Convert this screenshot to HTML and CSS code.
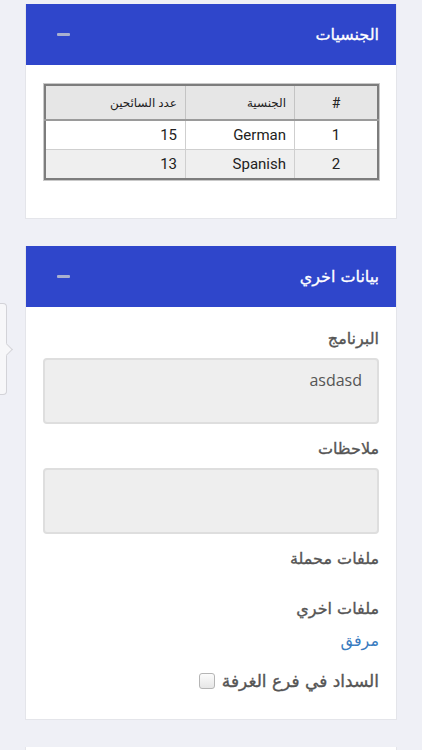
FILE: index.html
```html
<!DOCTYPE html>
<html lang="ar" dir="rtl">
<head>
<meta charset="utf-8">
<title>بيانات</title>
<link rel="stylesheet" href="styles.css">
</head>
<body>
<div class="page">
  <section class="card">
    <header class="card-head">
      <h2 class="card-title">الجنسيات</h2>
      <span class="collapse"></span>
    </header>
    <div class="card-body table-body">
      <table class="grid">
        <thead>
          <tr><th class="c1">#</th><th class="c2">الجنسية</th><th class="c3">عدد السائحين</th></tr>
        </thead>
        <tbody>
          <tr><td class="c1">1</td><td class="c2">German</td><td class="c3">15</td></tr>
          <tr class="alt"><td class="c1">2</td><td class="c2">Spanish</td><td class="c3">13</td></tr>
        </tbody>
      </table>
    </div>
  </section>

  <section class="card">
    <header class="card-head">
      <h2 class="card-title">بيانات اخري</h2>
      <span class="collapse"></span>
    </header>
    <div class="card-body form-body">
      <label class="lbl">البرنامج</label>
      <div class="field">asdasd</div>
      <label class="lbl gap-s">ملاحظات</label>
      <div class="field"></div>
      <label class="lbl gap-s">ملفات محملة</label>
      <label class="lbl gap-l">ملفات اخري</label>
      <a class="link" href="#">مرفق</a>
      <div class="check-row">
        <span class="lbl check-lbl">السداد في فرع الغرفة</span>
        <span class="box"></span>
      </div>
    </div>
  </section>

  <section class="card stub"></section>
</div>
<div class="popover"></div>
</body>
</html>
```
FILE: styles.css
```css
html, body {
  margin: 0;
  padding: 0;
  background: #eff0f6;
  height: 750px;
  overflow: hidden;
}
body {
  font-family: "DejaVu Sans", "Noto Sans", sans-serif;
  position: relative;
}
.page {
  padding: 4px 25px 0 25px;
  display: flex;
  flex-direction: column;
  gap: 27px;
}
.card {
  background: #fff;
  border: 1px solid #e4e5ea;
  border-top: none;
  box-sizing: border-box;
  width: 372px;
}
.card-head {
  background: #2f46cb;
  height: 61px;
  display: flex;
  align-items: center;
  justify-content: space-between;
  padding: 0 17px 0 31px;
  box-sizing: border-box;
}
.card-title {
  margin: 0;
  color: #fff;
  font-size: 16px;
  font-weight: normal;
  line-height: 24px;
  -webkit-text-stroke: 0.3px #fff;
}
.collapse {
  width: 13px;
  height: 3px;
  background: #a9b0cf;
  border-radius: 1px;
}
.table-body {
  padding: 19px 17px 38px 17px;
}
.grid {
  width: 335px;
  border-collapse: collapse;
  border: 2px solid #7d7d7d;
  box-shadow: 0 0 0 1px #c9c9c9;
  font-family: Roboto, "DejaVu Sans", sans-serif;
  color: #222;
}
.grid th {
  background: #e6e6e6;
  height: 33px;
  font-weight: normal;
  font-size: 12px;
  padding: 0 8px;
  text-align: right;
  border: 1px solid #c4c4c4;
  border-bottom: 2px solid #9a9a9a;
}
.grid td {
  height: 28px;
  font-size: 15px;
  padding: 0 8px;
  text-align: right;
  border: 1px solid #cfcfcf;
  background: #fff;
}
.grid tr.alt td {
  background: #efefef;
}
.grid .c1 { width: 66px; text-align: center; }
.grid .c2 { width: 92px; }
.grid th.c1 { font-size: 14px; }
.form-body {
  padding: 20px 17px 26px 17px;
  display: flex;
  flex-direction: column;
}
.lbl {
  display: block;
  font-size: 16px;
  font-weight: normal;
  color: #555;
  line-height: 24px;
  -webkit-text-stroke: 0.35px #555;
}
.check-lbl {
  font-size: 17px;
}
.gap-s { margin-top: 13px; }
.gap-l { margin-top: 26px; }
.field {
  margin-top: 7px;
  height: 66px;
  box-sizing: border-box;
  background: #eeeeee;
  border: 2px solid #dedede;
  border-radius: 4px;
  padding: 8px 15px;
  font-family: "Open Sans", sans-serif;
  font-size: 16px;
  color: #555;
  line-height: 24px;
}
.field + .lbl { margin-top: 13px; }
.link {
  margin-top: 8px;
  color: #3a7cc0;
  text-decoration: none;
  font-size: 16px;
  line-height: 24px;
  align-self: flex-start;
}
.check-row {
  margin-top: 16px;
  display: flex;
  align-items: center;
  gap: 7px;
}
.box {
  width: 14px;
  height: 14px;
  border: 1px solid #b5b5b5;
  border-radius: 3px;
  background: linear-gradient(#fbfbfb, #e6e6e6);
}
.stub {
  height: 30px;
}
.popover {
  position: absolute;
  left: 0;
  top: 303px;
  width: 7px;
  height: 92px;
  border: 1px solid #d3d3d8;
  border-left: none;
  border-radius: 0 4px 4px 0;
  background: #f7f7f9;
  box-sizing: border-box;
}
.popover::after {
  content: "";
  position: absolute;
  right: -5px;
  top: 41px;
  width: 8px;
  height: 8px;
  background: #f7f7f9;
  border-right: 1px solid #d3d3d8;
  border-top: 1px solid #d3d3d8;
  transform: rotate(45deg);
}
```
